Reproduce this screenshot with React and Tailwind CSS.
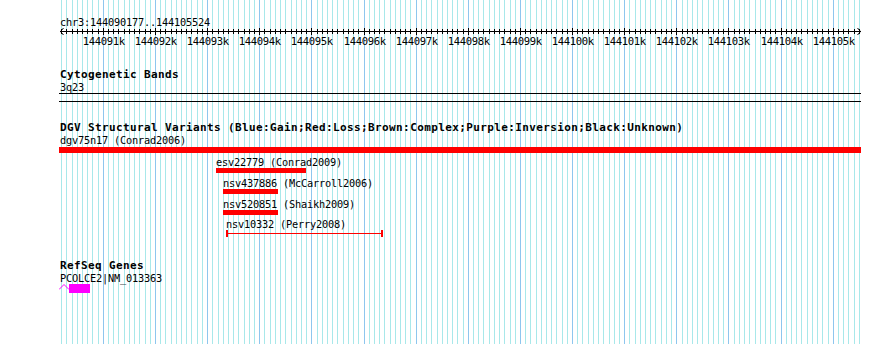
import React from 'react';

const START = 144090177;
const END = 144105524;
const px = (pos) => Math.floor(60.4 + (pos - START) * 0.05214);

const ticks = [];
for (let p = 144090200; p <= 144105500; p += 100) ticks.push(p);
const majors = ticks.filter((p) => p % 1000 === 0);

function Grid() {
  return (
    <svg className="absolute inset-0" width="890" height="344">
      {ticks.map((p) => (
        <rect
          key={p}
          x={px(p)}
          y="0"
          width="1"
          height="344"
          fill={p % 1000 === 0 ? '#8ec6ee' : '#a8e8ea'}
        />
      ))}
    </svg>
  );
}

function Ruler() {
  return (
    <svg width="890" height="22" className="block">
      <rect x="60" y="5" width="801" height="1" fill="#000" />
      <path d="M63.5 2 L60.5 5.5 L63.5 9 M857.5 2 L860.5 5.5 L857.5 9" stroke="#000" fill="none" strokeWidth="1" />
      {ticks.map((p) =>
        p % 1000 === 0 ? (
          <rect key={p} x={px(p)} y="2" width="1" height="7" fill="#000" />
        ) : (
          <rect key={p} x={px(p)} y="3" width="1" height="5" fill="#000" />
        )
      )}
      {majors.map((p) => (
        <text
          key={p}
          x={px(p) + 0.8}
          y="19"
          textAnchor="middle"
          fontSize="10.6"
          letterSpacing="-0.38"
          fontFamily="'DejaVu Sans Mono', monospace"
          fill="#000"
        >
          {p / 1000}k
        </text>
      ))}
    </svg>
  );
}

const small = 'h-[12px] leading-[12px] text-[10.3px] tracking-[-0.2px] whitespace-nowrap';
const bold = 'h-[12px] leading-[12px] text-[11px] tracking-[0.38px] font-bold whitespace-nowrap';

function Feature({ label, left, width }) {
  return (
    <div className="mt-[4px]">
      <div className={small} style={{ paddingLeft: left }}>{label}</div>
      <div className="h-[5px] bg-[#ff0000]" style={{ marginLeft: left, width }} />
    </div>
  );
}

export default function App() {
  return (
    <div className="relative w-[890px] h-[344px] bg-white overflow-hidden text-black font-['DejaVu_Sans_Mono',monospace]">
      <Grid />
      <div className="relative">
        <div className="pt-[16px] h-[26px]">
          <div className={`pl-[60px] ${small}`}>chr3:{START}..{END}</div>
        </div>
        <Ruler />

        <div className={`mt-[21px] pl-[60px] ${bold}`}>Cytogenetic Bands</div>
        <div className={`pl-[60px] ${small}`}>3q23</div>
        <div className="ml-[59px] w-[802px] h-px bg-black" />
        <div className="mt-[7px] ml-[59px] w-[802px] h-px bg-black" />

        <div className={`mt-[20px] pl-[60px] ${bold}`}>
          DGV Structural Variants (Blue:Gain;Red:Loss;Brown:Complex;Purple:Inversion;Black:Unknown)
        </div>
        <div className={`pl-[60px] ${small}`}>dgv75n17 (Conrad2006)</div>
        <div className="mt-px ml-[59px] w-[802px] h-[6px] bg-[#ff0000]" />

        <div className="-mt-[1px]">
          <Feature label="esv22779 (Conrad2009)" left={216} width={90} />
        </div>
        <Feature label="nsv437886 (McCarroll2006)" left={223} width={55} />
        <Feature label="nsv520851 (Shaikh2009)" left={223} width={55} />

        <div className="mt-[3px]">
          <div className={`pl-[226px] ${small}`}>nsv10332 (Perry2008)</div>
          <svg width="890" height="7" className="block">
            <rect x="226" y="0" width="2" height="7" fill="#ff0000" />
            <rect x="228" y="3" width="153" height="1" fill="#ff0000" />
            <rect x="381" y="0" width="2" height="7" fill="#ff0000" />
          </svg>
        </div>

        <div className={`mt-[23px] pl-[60px] ${bold}`}>RefSeq Genes</div>
        <div className={`pl-[60px] ${small}`}>PCOLCE2|NM_013363</div>
        <svg width="100" height="10" className="block ml-[59px]">
          <path d="M0 5.5 L5 0.5 L10 5.5" stroke="#ff00ff" fill="none" strokeWidth="1" />
          <rect x="10" y="0" width="21" height="9" fill="#ff00ff" />
        </svg>
      </div>
    </div>
  );
}
